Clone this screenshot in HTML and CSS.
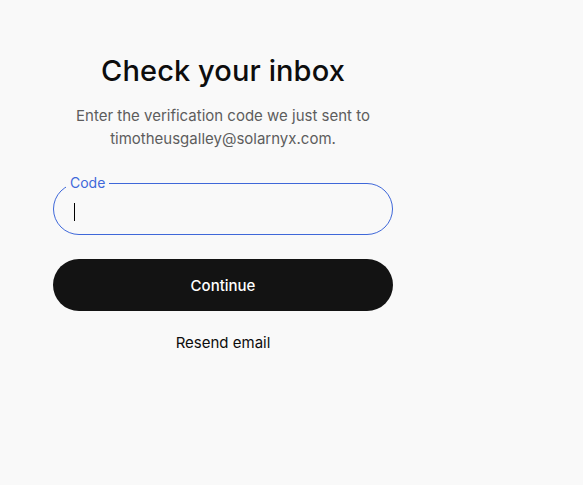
FILE: index.html
```html
<!DOCTYPE html>
<html lang="en">
<head>
    <meta charset="UTF-8">
    <meta name="viewport" content="width=device-width, initial-scale=1.0">
    <title>Check your inbox</title>
    <link rel="stylesheet" href="styles.css">
</head>
<body>
    <main class="verify">
        <h1 class="verify-title">Check your inbox</h1>
        <p class="verify-text">Enter the verification code we just sent to timotheusgalley@solarnyx.com.</p>

        <fieldset class="code-field">
            <legend class="code-label">Code</legend>
            <div class="code-input"><span class="caret"></span></div>
        </fieldset>

        <button class="continue-btn">Continue</button>
        <a class="resend-link" href="#">Resend email</a>
    </main>
</body>
</html>
```

FILE: styles.css
```css
* {
    margin: 0;
    padding: 0;
    box-sizing: border-box;
}

body {
    font-family: Inter, "Noto Sans", sans-serif;
    background: #f9f9f9;
    color: #0d0d0d;
    min-height: 100vh;
}

.verify {
    width: 340px;
    margin-left: 53px;
    padding-top: 52px;
    display: flex;
    flex-direction: column;
    align-items: stretch;
    text-align: center;
}

.verify-title {
    font-size: 29px;
    font-weight: 500;
    line-height: 38px;
    letter-spacing: 0.1px;
    color: #0d0d0d;
}

.verify-text {
    margin-top: 14px;
    padding: 0 20px;
    font-size: 15px;
    line-height: 23px;
    color: #5d5d5d;
}

.code-field {
    margin-top: 25px;
    height: 60px;
    border: 1px solid #3f68d9;
    border-radius: 26px;
    padding: 0 20px;
    text-align: left;
}

.code-label {
    padding: 0 4px;
    margin-left: -8px;
    font-size: 14px;
    line-height: 16px;
    color: #3f68d9;
}

.code-input {
    height: 42px;
    display: flex;
    align-items: center;
}

.caret {
    display: block;
    width: 1px;
    height: 18px;
    background: #000;
}

.continue-btn {
    margin-top: 24px;
    height: 52px;
    border: none;
    border-radius: 26px;
    background: #131313;
    color: #fff;
    font-family: inherit;
    font-size: 15px;
    font-weight: 500;
    cursor: pointer;
}

.resend-link {
    margin-top: 22px;
    font-size: 15px;
    line-height: 20px;
    color: #0d0d0d;
    text-decoration: none;
}
```
